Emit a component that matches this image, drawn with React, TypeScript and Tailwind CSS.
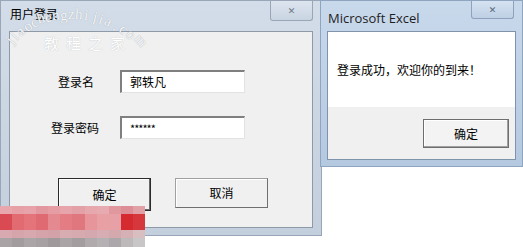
import React from 'react';

const mosaic: string[][] = [
  ['#e8a7ad', '#e6a0a6', '#e7a3a9', '#e3979e', '#e59ca3', '#e7a5ab', '#e3a0a6', '#e6a8ad', '#e7aab0', '#e0979e', '#dc8d95', '#e0a0a5'],
  ['#d94a52', '#e26b72', '#e4737a', '#e06a72', '#e58990', '#e37c83', '#e0777e', '#e7959b', '#e9a0a5', '#e7a0a5', '#d42a30', '#d6373c'],
  ['#d8a9b0', '#d6a4ab', '#d7a9af', '#d5a4aa', '#d3a1a8', '#d8adb2', '#d7aab0', '#d4a8ae', '#d6adb2', '#d3a9ae', '#d5b0b5', '#d8bdc1'],
  ['#a9a3a6', '#a29c9f', '#aba5a8', '#a7a1a4', '#9f999c', '#aaa4a7', '#a39da0', '#b0aaad', '#b5b0b3', '#aca7aa', '#bdb9bb', '#c9c6c8'],
];

const rowHeights = ['h-[8px]', 'h-[16px]', 'h-[8px]', 'h-[9px]'];

// watermark letters laid along an arc: [char, x, y, rotation]
const arc: [string, number, number, number][] = [
  ['j', 8, 26, -55],
  ['i', 13, 22, -48],
  ['a', 17, 17, -40],
  ['o', 24, 12, -32],
  ['c', 31, 8, -24],
  ['h', 37, 4, -16],
  ['e', 45, 3, -10],
  ['n', 52, 1, -6],
  ['g', 60, 1, -2],
  ['z', 68, 0, 0],
  ['h', 75, 0, 4],
  ['i', 84, 1, 8],
  ['j', 93, 3, 14],
  ['i', 99, 5, 20],
  ['a', 105, 7, 26],
  ['.', 114, 12, 32],
  ['c', 120, 15, 38],
  ['o', 127, 20, 44],
  ['m', 135, 26, 50],
];

const font = { fontFamily: '"Noto Sans CJK SC", "DejaVu Sans", sans-serif' };

const App = () => {
  return (
    <div className="relative w-[523px] h-[247px] overflow-hidden bg-white" style={font}>
      <div className="flex">
        {/* Login window */}
        <div className="w-[322px] h-[236px] flex flex-col bg-gradient-to-b from-[#d3dde9] to-[#c3cfdd] border border-[#98a6b8] px-[8px] pb-[7px]">
          <div className="h-[30px] flex items-start justify-between">
            <span className="text-[12px] leading-none text-black mt-[7px] ml-[1px]">用户登录</span>
            <div className="w-[43px] h-[20px] border border-t-0 border-[#9aa6b6] rounded-b-[3px] bg-gradient-to-b from-[#dde5ef] to-[#c9d4e2] flex items-center justify-center text-[9px] text-[#6d7888]">
              ✕
            </div>
          </div>
          <div className="flex-1 bg-[#f0f0f0] border border-[#8f9aa8] flex flex-col">
            <div className="flex items-center mt-[38px]">
              <span className="w-[110px] pl-[48px] text-[12px] text-black">登录名</span>
              <div className="w-[125px] h-[23px] bg-white border-t-2 border-l-2 border-[#7f7f7f] border-r border-b border-r-[#e3e3e3] border-b-[#e3e3e3] flex items-center pl-[8px] text-[12px] text-black">
                郭轶凡
              </div>
            </div>
            <div className="flex items-center mt-[23px]">
              <span className="w-[110px] pl-[41px] text-[12px] text-black">登录密码</span>
              <div className="w-[125px] h-[23px] bg-white border-t-2 border-l-2 border-[#7f7f7f] border-r border-b border-r-[#e3e3e3] border-b-[#e3e3e3] flex items-center pl-[8px] text-[11px] text-black tracking-[-1px]">
                ******
              </div>
            </div>
            <div className="flex mt-[39px] pl-[48px] gap-[24px]">
              <div className="w-[93px] h-[33px] border border-[#2b2b2b] bg-[#f0f0f0] flex items-center justify-center text-[12px] text-black shadow-[inset_-1px_-1px_0_#696969,inset_1px_1px_0_#ffffff]">
                确定
              </div>
              <div className="w-[93px] h-[30px] border border-[#a0a0a0] border-r-[#6f6f6f] border-b-[#6f6f6f] bg-[#f0f0f0] flex items-center justify-center text-[12px] text-black shadow-[inset_1px_1px_0_#ffffff]">
                取消
              </div>
            </div>
          </div>
        </div>

        {/* Message box */}
        <div className="w-[203px] h-[167px] -ml-[2px] flex flex-col bg-gradient-to-b from-[#c9d9ec] to-[#b4c8e0] border border-[#8fa4bf] px-[6px] pb-[6px]">
          <div className="h-[30px] flex items-start justify-between">
            <span className="text-[13px] leading-none text-[#1e1e1e] mt-[11px] ml-[1px]" style={{ fontFamily: '"Open Sans", "DejaVu Sans", sans-serif' }}>
              Microsoft Excel
            </span>
            <div className="w-[43px] h-[18px] mr-[2px] border border-t-0 border-[#8fa2bb] rounded-b-[3px] bg-gradient-to-b from-[#d5e2f1] to-[#bfd0e5] flex items-center justify-center text-[9px] text-[#596679]">
              ✕
            </div>
          </div>
          <div className="flex-1 flex flex-col border border-[#7f93ad]">
            <div className="h-[75px] bg-white flex items-center pl-[9px] text-[12px] text-black">
              登录成功，欢迎你的到来！
            </div>
            <div className="flex-1 bg-[#f0f0f0] flex justify-end items-start pt-[12px] pr-[6px]">
              <div className="w-[86px] h-[29px] border border-[#6e6e6e] bg-[#f3f3f3] flex items-center justify-center text-[12px] text-black shadow-[inset_-1px_-1px_0_#a0a0a0,inset_1px_1px_0_#ffffff]">
                确定
              </div>
            </div>
          </div>
        </div>
      </div>

      {/* watermark */}
      <div className="absolute left-0 top-[7px] w-[150px] h-[45px] pointer-events-none" style={{ fontFamily: '"Liberation Serif", serif' }}>
        {arc.map(([ch, x, y, r], i) => (
          <span
            key={i}
            className="absolute text-[15px] leading-none text-white/90 [text-shadow:0_0_1px_#8a94a0]"
            style={{ left: x, top: y, transform: `rotate(${r}deg)` }}
          >
            {ch}
          </span>
        ))}
      </div>
      <div className="absolute left-[44px] top-[35px] text-white text-[15px] leading-none tracking-[7px] [text-shadow:0_0_1px_#b0b6bd]" style={{ fontFamily: '"Noto Sans CJK SC", serif' }}>
        教程之家
      </div>

      {/* pixelated block */}
      <div className="absolute left-0 top-[206px] w-[145px] flex flex-col">
        {mosaic.map((row, i) => (
          <div key={i} className={`flex ${rowHeights[i]}`}>
            {row.map((c, j) => (
              <div key={j} className="flex-1" style={{ backgroundColor: c }} />
            ))}
          </div>
        ))}
      </div>
    </div>
  );
};

export default App;
